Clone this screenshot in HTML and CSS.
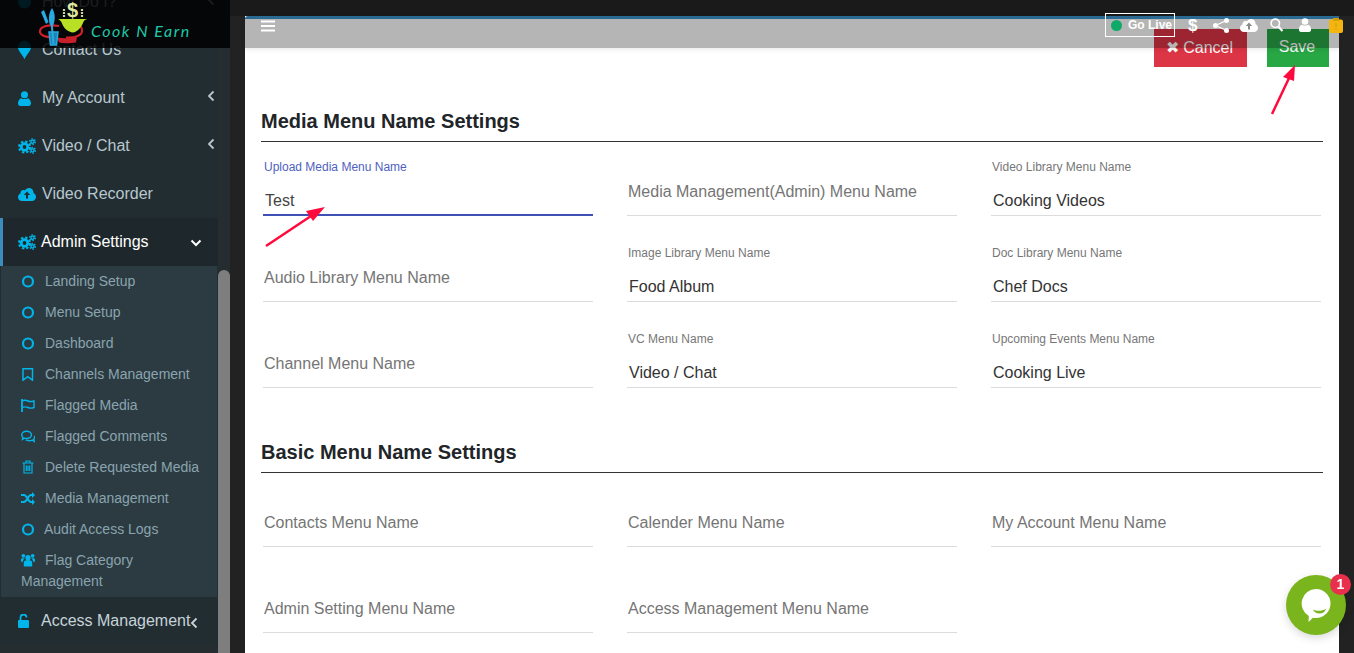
FILE: index.html
```html
<!DOCTYPE html>
<html lang="en">
<head>
  <meta charset="UTF-8">
  <title>Menu Name Settings</title>
  <link rel="stylesheet" href="styles.css">
</head>
<body>
  <svg class="sprite" width="0" height="0">
    <symbol id="i-gears" viewBox="0 0 18 16">
      <circle cx="6.500" cy="9" r="3.300" fill="none" stroke="currentColor" stroke-width="2.800"/>
      <circle cx="6.500" cy="9" r="5.500" fill="none" stroke="currentColor" stroke-width="2" stroke-dasharray="2.400 1.920"/>
      <circle cx="14.500" cy="3.700" r="1.600" fill="none" stroke="currentColor" stroke-width="1.500"/>
      <circle cx="14.500" cy="3.700" r="2.900" fill="none" stroke="currentColor" stroke-width="1.300" stroke-dasharray="1.500 1.540"/>
      <circle cx="14.500" cy="12.300" r="1.600" fill="none" stroke="currentColor" stroke-width="1.500"/>
      <circle cx="14.500" cy="12.300" r="2.900" fill="none" stroke="currentColor" stroke-width="1.300" stroke-dasharray="1.500 1.540"/>
    </symbol>
    <symbol id="i-user" viewBox="0 0 14 16">
      <circle cx="7" cy="4" r="3.800" fill="currentColor"/>
      <path d="M0 13.200C0 10 1.800 8 3.600 7.600 5.600 9 8.400 9 10.400 7.600 12.200 8 14 10 14 13.200 14 15 13 16 11.600 16H2.400C1 16 0 15 0 13.200Z" fill="currentColor"/>
    </symbol>
    <symbol id="i-cloud" viewBox="0 0 18 13">
      <path d="M4 13C1.800 13 0 11.300 0 9.200 0 7.500 1 6.200 2.500 5.600 2.500 5.400 2.500 5.200 2.500 5 2.500 3.300 3.800 2 5.400 2 6 2 6.500 2.200 6.900 2.400 7.700 1 9.200 0 11 0 13.500 0 15.500 2 15.500 4.500L15.500 5.100C17 5.800 18 7.300 18 9 18 11.200 16.200 13 14 13Z" fill="currentColor"/>
    </symbol>
  </svg>

  <aside class="sidebar">
    <div class="logo">
      <svg class="logo-mark" width="52" height="48" viewBox="0 0 52 48">
        <path d="M20 26C8 24 1 27 1 31.500S9 38 18 37.500M38 26c4-1 5 2 5 5 0 4-6 7-16 6.500" fill="none" stroke="#d0202a" stroke-width="2.200"/>
        <path d="M18 37.500c6 1 14 1 20-.5l-1 5.500c-6 1-12 1-17 0Z" fill="#c8202a"/>
        <path d="M19 19h29c-3 1-3 2-4 4-2 5-6 9-10 9.500-5-.5-9-4-11-9-.5-2-2-3.500-4-4.500Z" fill="#b9e025"/>
        <path d="M2 12l5 12 2.500-2L5 10ZM13 8c4 6 3 13 1 18l-3-1c-2-6-1-13 2-17Z" fill="#28a9e0"/>
        <path d="M10 32h9l-1.500 13h-6Z" fill="#1b86b5" stroke="#28a9e0" stroke-width="1.500"/>
        <path d="M12.500 22l2 22" stroke="#28a9e0" stroke-width="2"/>
        <text x="28" y="17" class="logo-dollar">$</text>
        <path d="M25 9v9M43 9v9" stroke="#c8d8a0" stroke-width="2.200" stroke-dasharray="2 1"/>
      </svg>
      <span class="logo-text">Cook N Earn</span>
    </div>

    <ul class="menu">
      <li class="menu-item">
        <svg class="menu-icon" width="16" height="16" viewBox="0 0 16 16"><circle cx="8" cy="8" r="8" fill="currentColor"/></svg>
        How Do I?
        <svg class="chev" width="8" height="12" viewBox="0 0 8 12"><path d="M6.500 1.500 2 6l4.500 4.500" fill="none" stroke="currentColor" stroke-width="1.800"/></svg>
      </li>
      <li class="menu-item">
        <svg class="menu-icon" width="14" height="20" viewBox="0 0 14 20"><path d="M7 20C5 15 0 11 0 7a7 7 0 0 1 14 0c0 4-5 8-7 13Z" fill="currentColor"/></svg>
        Contact Us
      </li>
      <li class="menu-item">
        <svg class="menu-icon" width="13" height="15"><use href="#i-user"/></svg>
        My Account
        <svg class="chev" width="8" height="12" viewBox="0 0 8 12"><path d="M6.500 1.500 2 6l4.500 4.500" fill="none" stroke="currentColor" stroke-width="1.800"/></svg>
      </li>
      <li class="menu-item">
        <svg class="menu-icon wide" width="18" height="16"><use href="#i-gears"/></svg>
        Video / Chat
        <svg class="chev" width="8" height="12" viewBox="0 0 8 12"><path d="M6.500 1.500 2 6l4.500 4.500" fill="none" stroke="currentColor" stroke-width="1.800"/></svg>
      </li>
      <li class="menu-item">
        <svg class="menu-icon wide" width="18" height="13" viewBox="0 0 18 13"><use href="#i-cloud"/><path d="M9 3.500 5.800 7H8v3.500h2V7h2.200Z" fill="#222d32"/></svg>
        Video Recorder
      </li>
      <li class="menu-item active">
        <svg class="menu-icon wide" width="18" height="16"><use href="#i-gears"/></svg>
        Admin Settings
        <svg class="chev-down" width="12" height="8" viewBox="0 0 12 8"><path d="M1.500 1.500 6 6l4.500-4.500" fill="none" stroke="currentColor" stroke-width="2"/></svg>
      </li>
      <li>
        <ul class="submenu">
          <li class="sub-item"><svg class="sub-icon" width="13" height="13" viewBox="0 0 13 13"><circle cx="6.500" cy="6.500" r="5" fill="none" stroke="currentColor" stroke-width="2.200"/></svg>Landing Setup</li>
          <li class="sub-item"><svg class="sub-icon" width="13" height="13" viewBox="0 0 13 13"><circle cx="6.500" cy="6.500" r="5" fill="none" stroke="currentColor" stroke-width="2.200"/></svg>Menu Setup</li>
          <li class="sub-item"><svg class="sub-icon" width="13" height="13" viewBox="0 0 13 13"><circle cx="6.500" cy="6.500" r="5" fill="none" stroke="currentColor" stroke-width="2.200"/></svg>Dashboard</li>
          <li class="sub-item"><svg class="sub-icon" width="13" height="13" viewBox="0 0 13 13"><path d="M1.500.8h9.500v11.400L6.250 8.600 1.500 12.200Z" fill="none" stroke="currentColor" stroke-width="1.500"/></svg>Channels Management</li>
          <li class="sub-item"><svg class="sub-icon" width="14" height="13" viewBox="0 0 14 13"><path d="M1 0v13" stroke="currentColor" stroke-width="1.800"/><path d="M1 2c2-1 4-1 6 0s4 .6 6 0v6.500c-2 .8-4 .8-6 0s-4-.8-6 0" fill="none" stroke="currentColor" stroke-width="1.400"/></svg>Flagged Media</li>
          <li class="sub-item"><svg class="sub-icon" width="15" height="13" viewBox="0 0 15 13"><path d="M6 .8c3 0 5.200 1.800 5.200 3.900S9 8.600 6 8.600c-.8 0-1.500-.1-2.200-.3L1.500 9.500l.6-2C1.200 6.800.8 5.800.8 4.700.8 2.600 3 .8 6 .8Z" fill="none" stroke="currentColor" stroke-width="1.500"/><path d="M5 10.200c3 1.300 5.500.8 7.200.2l2 1.400-.6-2.300c1-.8 1.200-2.200.6-3.500" fill="none" stroke="currentColor" stroke-width="1.500"/></svg>Flagged Comments</li>
          <li class="sub-item"><svg class="sub-icon" width="13" height="14" viewBox="0 0 13 14"><path d="M1 3h11M4.500 3V1h4v2M2.500 3v10h8V3M4.800 5.500v5.500M6.500 5.500v5.500M8.200 5.500v5.500" fill="none" stroke="currentColor" stroke-width="1.200"/></svg>Delete Requested Media</li>
          <li class="sub-item"><svg class="sub-icon" width="14" height="13" viewBox="0 0 14 13"><path d="M0 3h3c3 0 4 7 7 7h1M0 10h3c3 0 4-7 7-7h1" fill="none" stroke="currentColor" stroke-width="2"/><path d="M11 0l3 3-3 3ZM11 7l3 3-3 3Z" fill="currentColor"/></svg>Media Management</li>
          <li class="sub-item tight"><svg class="sub-icon" width="13" height="13" viewBox="0 0 13 13"><circle cx="6.500" cy="6.500" r="5" fill="none" stroke="currentColor" stroke-width="2.200"/></svg>Audit Access Logs</li>
          <li class="sub-item wrap"><svg class="sub-icon" width="15" height="14" viewBox="0 0 15 14"><circle cx="7.500" cy="4.500" r="2.800" fill="currentColor"/><circle cx="2.500" cy="2.500" r="2" fill="currentColor"/><circle cx="12.500" cy="2.500" r="2" fill="currentColor"/><path d="M3 14V10c0-2 1.500-3 4.500-3s4.500 1 4.500 3v4ZM0 9V6.500C0 5.500.8 5 2 5h2c-1 1-2 2-2 4ZM15 9V6.500c0-1-.8-1.500-2-1.500h-2c1 1 2 2 2 4Z" fill="currentColor"/></svg>Flag Category Management</li>
        </ul>
      </li>
      <li class="menu-item access">
        <svg class="menu-icon" width="11" height="14" viewBox="0 0 11 14"><path d="M2.500 6V3.500a3 3 0 0 1 6 0" fill="none" stroke="currentColor" stroke-width="1.800"/><rect y="6" width="11" height="8" rx="1" fill="currentColor"/></svg>
        Access Management
        <svg class="chev-tight" width="8" height="12" viewBox="0 0 8 12"><path d="M6.500 1.500 2 6l4.500 4.500" fill="none" stroke="currentColor" stroke-width="1.800"/></svg>
      </li>
    </ul>
    <div class="scroll-thumb"></div>
  </aside>

  <div class="page">
    <div class="top-strip"></div>
    <div class="shell">
      <main class="panel">
        <div class="actions">
          <button class="btn btn-cancel">&#10006; Cancel</button>
          <button class="btn btn-save">Save</button>
        </div>

        <h2 class="section-title first">Media Menu Name Settings</h2>
        <div class="fields">
          <div class="field filled focus"><label>Upload Media Menu Name</label><span class="value">Test</span></div>
          <div class="field"><span class="placeholder">Media Management(Admin) Menu Name</span></div>
          <div class="field filled"><label>Video Library Menu Name</label><span class="value">Cooking Videos</span></div>
          <div class="field"><span class="placeholder">Audio Library Menu Name</span></div>
          <div class="field filled"><label>Image Library Menu Name</label><span class="value">Food Album</span></div>
          <div class="field filled"><label>Doc Library Menu Name</label><span class="value">Chef Docs</span></div>
          <div class="field"><span class="placeholder">Channel Menu Name</span></div>
          <div class="field filled"><label>VC Menu Name</label><span class="value">Video / Chat</span></div>
          <div class="field filled"><label>Upcoming Events Menu Name</label><span class="value">Cooking Live</span></div>
        </div>

        <h2 class="section-title">Basic Menu Name Settings</h2>
        <div class="fields">
          <div class="field"><span class="placeholder">Contacts Menu Name</span></div>
          <div class="field"><span class="placeholder">Calender Menu Name</span></div>
          <div class="field"><span class="placeholder">My Account Menu Name</span></div>
          <div class="field"><span class="placeholder">Admin Setting Menu Name</span></div>
          <div class="field"><span class="placeholder">Access Management Menu Name</span></div>
        </div>
      </main>
    </div>

    <!-- translucent bar sits on top of the panel -->
    <header class="topbar">
      <svg class="burger" width="14" height="12" viewBox="0 0 14 12"><path d="M0 1.500h14M0 6h14M0 10.500h14" stroke="#fff" stroke-width="2.200"/></svg>
      <div class="top-icons">
        <div class="go-live"><span class="dot"></span>Go Live</div>
        <span class="dollar">$</span>
        <svg class="ic-share" width="16" height="15" viewBox="0 0 16 15"><circle cx="2.500" cy="7.500" r="2.500" fill="#fff"/><circle cx="13.500" cy="2.500" r="2.500" fill="#fff"/><circle cx="13.500" cy="12.500" r="2.500" fill="#fff"/><path d="M2.500 7.500l11-5M2.500 7.500l11 5" stroke="#fff" stroke-width="1.300"/></svg>
        <svg class="ic-cloud" width="18" height="13" viewBox="0 0 18 13" color="#fff"><use href="#i-cloud"/><path d="M9 3.500 5.800 7H8v3.500h2V7h2.200Z" fill="#8a8a8a"/></svg>
        <svg class="ic-search" width="13" height="14" viewBox="0 0 13 14"><circle cx="5.300" cy="5.300" r="4.200" fill="none" stroke="#fff" stroke-width="1.600"/><path d="M8.500 8.800 12.500 13" stroke="#fff" stroke-width="2.200"/></svg>
        <svg class="ic-user" width="14" height="14" viewBox="0 0 14 16" color="#fff"><use href="#i-user"/></svg>
        <svg class="ic-clip" width="14" height="15" viewBox="0 0 14 15"><rect y="1.500" width="14" height="13.500" rx="2" fill="#f5b50f"/><rect x="4" width="6" height="3" fill="#d59f00"/><path d="M7 5v4M7 10.500v1.500" stroke="#d8a20a" stroke-width="1.200"/></svg>
      </div>
    </header>
  </div>

  <!-- hand-drawn annotation arrows over the screenshot -->
  <svg class="arrows" width="1354" height="653" viewBox="0 0 1354 653">
    <path d="M266 246 314 214" stroke="#ff0a3c" stroke-width="2.500"/>
    <path d="M325 207 306 211 313 221Z" fill="#ff0a3c"/>
    <path d="M1272 114 1290 76" stroke="#ff0a3c" stroke-width="2.500"/>
    <path d="M1295 65 1283 77 1294 81Z" fill="#ff0a3c"/>
  </svg>

  <div class="chat">
    <svg width="30" height="33" viewBox="0 0 30 33"><path d="M15 0a14.500 14.500 0 0 1 0 29c-1 0-2-.1-3-.3L7.500 33l.3-6A14.500 14.500 0 0 1 15 0Z" fill="#fff"/><path d="M12 20.500c3 1.500 8 2 13-.5-1 3-3.500 4.500-6.500 4.500-3 0-5.500-1.500-6.500-4Z" fill="#7ab51d"/></svg>
    <span class="badge">1</span>
  </div>
</body>
</html>
```

FILE: styles.css
```css
* {
  box-sizing: border-box;
}
html, body {
  height: 100%;
}
body {
  margin: 0;
  display: flex;
  overflow: hidden;
  font-family: "Liberation Sans", Arial, sans-serif;
  background-color: #222;
  color: #212529;
}
ul {
  list-style: none;
  margin: 0;
  padding: 0;
}
.sprite {
  position: absolute;
}

/* sidebar */
.sidebar {
  position: relative;
  flex: 0 0 230px;
  height: 653px;
  overflow: hidden;
  background-color: #262d31;
}
.logo {
  position: absolute;
  top: 0;
  left: 0;
  z-index: 2;
  width: 230px;
  height: 48px;
  background-color: rgba(0, 0, 0, 0.86);
}
.logo-mark {
  position: absolute;
  left: 39px;
  top: 0;
}
.logo-dollar {
  font-size: 20px;
  font-weight: bold;
  fill: #dfe8a0;
}
.logo-text {
  position: absolute;
  left: 91px;
  top: 21px;
  font-family: Lato, sans-serif;
  font-style: italic;
  font-size: 16px;
  letter-spacing: 1.5px;
  color: #1fc8a8;
}
.menu {
  width: 218px;
  margin-top: -22px;
  background-color: #222d32;
}
.menu-item {
  display: flex;
  align-items: center;
  height: 48px;
  padding-left: 18px;
  font-size: 16px;
  color: #b8c7ce;
}
.menu-icon {
  flex: 0 0 auto;
  width: 13px;
  margin-right: 11px;
  color: #00b5e9;
}
.menu-icon.wide {
  width: 18px;
  margin-right: 6px;
}
.chev {
  margin: -5px 3px 0 auto;
}
.menu-item.active {
  padding-left: 15px;
  border-left: 3px solid #3c8dbc;
  background-color: #1e282c;
  color: #fff;
}
.menu-item.active .menu-icon {
  margin-right: 5px;
}
.chev-down {
  margin: 2px 16px 0 auto;
}
.menu-item.access {
  color: #c6d3d9;
}
.menu-item.access .menu-icon {
  margin-right: 12px;
  width: 11px;
}
.chev-tight {
  margin: 4px 0 0 0;
}
.submenu {
  margin-left: 1px;
  width: 216px;
  background-color: #2c3b41;
}
.sub-item {
  padding: 5px 4px 5px 20px;
  font-size: 14px;
  line-height: 21px;
  color: #8aa4af;
}
.sub-icon {
  display: inline-block;
  width: 14px;
  margin-right: 10px;
  vertical-align: -2px;
  color: #00b5e9;
}
.sub-item.tight .sub-icon {
  margin-right: 9px;
}
.scroll-thumb {
  position: absolute;
  left: 218px;
  top: 270px;
  width: 12px;
  height: 400px;
  border-radius: 6px;
  background-color: #7e7e7e;
}

/* main area */
.page {
  position: relative;
  flex: 1;
  min-width: 0;
}
.top-strip {
  height: 16px;
  background-color: #1a1a1a;
}
.shell {
  padding: 0 15px;
}
.panel {
  height: 637px;
  padding: 13px 16px 0;
  background-color: #fff;
  overflow: hidden;
}
.actions {
  display: flex;
  justify-content: flex-end;
  gap: 20px;
  margin-right: -6px;
}
.btn {
  height: 38px;
  border: 0;
  font-family: inherit;
  font-size: 16px;
  color: #fff;
}
.btn-cancel {
  padding: 0 14px 2px 12px;
  background-color: #dc3545;
}
.btn-save {
  width: 62px;
  padding: 0 2px 2px 0;
  background-color: #28a745;
}
.section-title {
  margin: 52px 0 0;
  padding-bottom: 8px;
  border-bottom: 1px solid #333;
  font-size: 20px;
  line-height: 24px;
  color: #212529;
}
.section-title.first {
  margin-top: 42px;
}
.fields {
  display: grid;
  grid-template-columns: repeat(3, 330px);
  column-gap: 34px;
  row-gap: 12px;
  padding: 0 2px;
}
.field {
  display: flex;
  flex-direction: column;
  justify-content: flex-end;
  height: 74px;
  border-bottom: 1px solid #dcdcdc;
}
.field label {
  margin: 0 0 17px 1px;
  font-size: 12px;
  line-height: 14px;
  color: #777;
}
.value {
  padding: 0 0 4px 2px;
  font-size: 16px;
  line-height: 20px;
  color: #333;
}
.placeholder {
  padding: 0 0 13px 1px;
  font-size: 16px;
  line-height: 20px;
  color: #757575;
}
.field.focus {
  border-bottom: 2px solid #3f51b5;
}
.field.focus label {
  color: #4f5fbf;
}
.field.focus .value {
  padding-bottom: 3px;
  color: #444;
}

/* top bar */
.topbar {
  position: absolute;
  top: 16px;
  left: 15px;
  right: 15px;
  height: 32px;
  display: flex;
  align-items: center;
  justify-content: space-between;
  padding: 0 0 17px 16px;
  border-top: 3px solid #2b6a92;
  border-top-left-radius: 3px;
  background-color: rgba(0, 0, 0, 0.29);
  box-shadow: 0 2px 4px rgba(0, 0, 0, 0.08);
}
.burger {
  margin-top: 2px;
}
.top-icons {
  display: flex;
  align-items: center;
  margin-right: -4px;
}
.go-live {
  display: flex;
  align-items: center;
  width: 70px;
  height: 24px;
  padding-left: 5px;
  border: 1px solid #fff;
  font-size: 12px;
  font-weight: bold;
  color: #fff;
}
.dot {
  width: 11px;
  height: 11px;
  margin-right: 6px;
  border-radius: 50%;
  background-color: #0fa968;
}
.dollar {
  width: 9px;
  margin-left: 13px;
  font-size: 17px;
  font-weight: bold;
  line-height: 1;
  color: #fff;
}
.ic-share {
  margin-left: 16px;
}
.ic-cloud {
  margin-left: 11px;
}
.ic-search {
  margin-left: 12px;
}
.ic-user {
  margin-left: 15px;
}
.ic-clip {
  margin-left: 17px;
}

/* overlays */
.arrows {
  position: absolute;
  top: 0;
  left: 0;
  pointer-events: none;
}
.chat {
  position: fixed;
  left: 1286px;
  top: 575px;
  display: flex;
  align-items: center;
  justify-content: center;
  width: 60px;
  height: 60px;
  border-radius: 50%;
  background-color: #7ab51d;
  box-shadow: 0 3px 8px rgba(0, 0, 0, 0.15);
}
.badge {
  position: absolute;
  top: -1px;
  right: -5px;
  width: 21px;
  height: 21px;
  border-radius: 50%;
  background-color: #e8304c;
  color: #fff;
  font-size: 14px;
  font-weight: bold;
  line-height: 21px;
  text-align: center;
}
```
